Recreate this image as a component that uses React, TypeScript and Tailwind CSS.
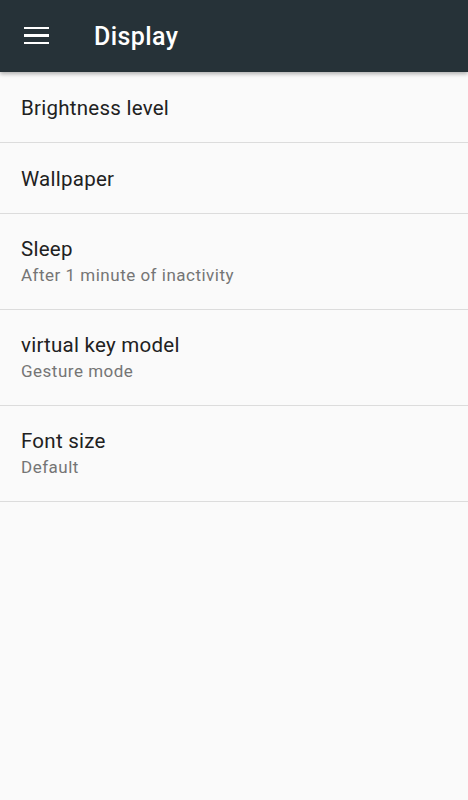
const items = [
  { title: 'Brightness level' },
  { title: 'Wallpaper' },
  { title: 'Sleep', summary: 'After 1 minute of inactivity' },
  { title: 'virtual key model', summary: 'Gesture mode' },
  { title: 'Font size', summary: 'Default' },
]

export default function App() {
  return (
    <div className="min-h-[800px] w-[468px] bg-[#fafafa] font-['Roboto',sans-serif]">
      {/* Toolbar */}
      <div className="relative z-10 flex h-[72px] items-center bg-[#263238] shadow-[0_2px_4px_rgba(0,0,0,0.3)]">
        <div className="ml-6 flex w-[25px] flex-col gap-[5px] pb-[1px]">
          <div className="h-[2.4px] bg-white" />
          <div className="h-[2.4px] bg-white" />
          <div className="h-[2.4px] bg-white" />
        </div>
        <h1 className="ml-[45px] pt-[2px] text-[25px] font-medium tracking-[0.4px] text-white">Display</h1>
      </div>

      {/* Preference list */}
      <div>
        {items.map((item) => (
          <div
            key={item.title}
            className={`flex flex-col justify-center border-b-[1.5px] border-[#dcdcdc] px-[21px] ${
              item.summary ? 'h-[96px]' : 'h-[71px] pt-[2px]'
            }`}
          >
            <div className="text-[20.5px] leading-[27px] tracking-[0.25px] text-[#212121]">{item.title}</div>
            {item.summary && (
              <div className="text-[17px] leading-[25px] tracking-[0.5px] text-[#757575]">{item.summary}</div>
            )}
          </div>
        ))}
      </div>
    </div>
  )
}
